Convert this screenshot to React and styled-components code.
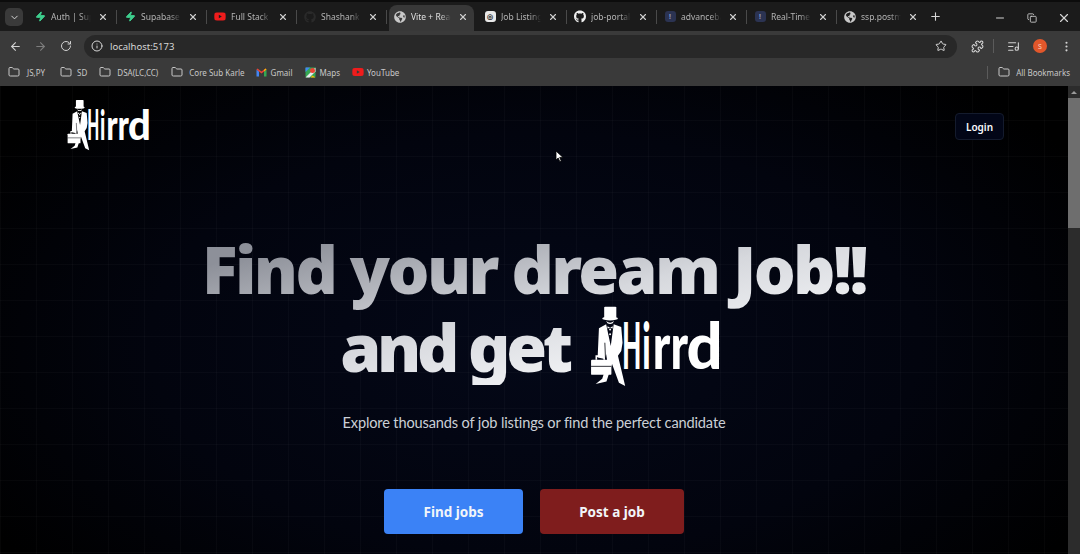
import React from "react";
import styled, { createGlobalStyle } from "styled-components";
import { ArrowLeft, ArrowRight, RotateCw, Info, Star, Puzzle, ListMusic, MoreVertical, Folder, X, Plus, Minus, ChevronDown, Zap, Copy } from "lucide-react";
import { FaGithub, FaYoutube, FaGlobeAmericas } from "react-icons/fa";

const Global = createGlobalStyle`
  html, body { margin: 0; padding: 0; background: #000; overflow: hidden; }
  * { box-sizing: border-box; }
  #root { width: 1080px; height: 554px; }
`;

const Window = styled.div`
  width: 1080px; height: 554px; display: flex; flex-direction: column; overflow: hidden;
  font-family: "Noto Sans", "Open Sans", sans-serif; background: #000;
`;
const TabStrip = styled.div`
  height: 31px; flex: none; display: flex; align-items: flex-end; padding: 3px 0 0 5px;
  background: #1b1b1b; border-top: 2px solid #0c0c0c; color: #d8d8d8;
`;
const TabMenu = styled.div`
  width: 18px; height: 18px; margin: 0 4px 5px 0; border-radius: 5px; background: #3a3a3a;
  display: flex; align-items: center; justify-content: center; flex: none;
`;
const Tab = styled.div`
  position: relative; width: 90px; height: 26px; flex: none; display: flex; align-items: center;
  padding: 0 8px 3px 7px; font-size: 8.5px; color: ${p => (p.$active ? "#e0e0e0" : "#b4b4b4")};
  &::after {
    content: ""; position: absolute; right: 0; top: 5px; height: 14px; width: 1px;
    background: ${p => (p.$active || p.$plain ? "transparent" : "#4a4a4a")};
  }
  &::before {
    content: ""; position: absolute; inset: 0 3px 0 2px; border-radius: 8px 8px 0 0;
    background: ${p => (p.$active ? "#383838" : "transparent")};
  }
`;
const TabIcon = styled.span`
  position: relative; width: 12px; height: 12px; flex: none; display: flex; align-items: center; justify-content: center;
`;
const TabTitle = styled.span`
  position: relative; margin: 0 6px 0 5px; flex: 1; overflow: hidden; white-space: nowrap;
  -webkit-mask-image: linear-gradient(to right, #000 72%, transparent);
  mask-image: linear-gradient(to right, #000 72%, transparent);
`;
const TabClose = styled.span`
  position: relative; width: 12px; flex: none; display: flex; justify-content: center; color: #cfcfcf;
`;
const NewTab = styled.div`
  width: 18px; height: 18px; margin: 0 0 6px -1px; display: flex; align-items: center; justify-content: center; color: #d6d6d6;
`;
const WindowButtons = styled.div`
  margin-left: auto; display: flex; align-self: flex-start; color: #d4d4d4; height: 26px; align-items: center;
`;
const WindowButton = styled.div`
  width: 32px; display: flex; justify-content: center;
`;
const Toolbar = styled.div`
  height: 30px; flex: none; display: flex; align-items: center; padding: 0 6px 0 3px; background: #3a3a3a; color: #cfcfcf;
`;
const ToolButton = styled.div`
  width: ${p => p.$w || 25}px; flex: none; display: flex; justify-content: center;
  color: ${p => (p.$dim ? "#7d7d7d" : "#d2d2d2")};
`;
const Omnibox = styled.div`
  height: 23px; width: 873px; margin: 0 8px 0 6px; flex: none; border-radius: 12px; background: #282828;
  display: flex; align-items: center; padding: 0 10px 0 7px; color: #d6d6d6; font-size: 9.5px;
`;
const Url = styled.span` margin-left: 7px; flex: 1; `;
const ToolSep = styled.div` width: 1px; height: 14px; margin-left: 4px; background: #5b5b5b; flex: none; `;
const Avatar = styled.div`
  width: 14px; height: 14px; flex: none; border-radius: 50%; background: #e2572b; color: #f8d3c4;
  font-size: 7px; display: flex; align-items: center; justify-content: center;
`;
const BookmarkBar = styled.div`
  height: 25px; flex: none; display: flex; align-items: center; padding: 0 10px 3px 8px; background: #3a3a3a; color: #c8c8c8; font-size: 8px;
`;
const Bookmark = styled.div`
  display: flex; align-items: center; gap: ${p => p.$inner ?? 6}px; margin-right: ${p => p.$gap ?? 14}px; white-space: nowrap;
`;
const BookmarkSep = styled.div` width: 1px; height: 13px; background: #5b5b5b; margin: 0 10px 0 auto; `;
const Viewport = styled.div`
  flex: 1; min-height: 0; display: flex; position: relative; overflow: hidden;
`;
const Page = styled.main`
  flex: 1; min-width: 0; position: relative; overflow: hidden; display: flex; flex-direction: column;
  background:
    linear-gradient(to right, rgba(255,255,255,.022) 1px, transparent 1px) 0 0 / 36px 36px,
    linear-gradient(to bottom, rgba(255,255,255,.022) 1px, transparent 1px) 0 -2px / 36px 36px,
    radial-gradient(ellipse 60% 75% at 50% 55%, #040818 0%, #02040e 60%, #000 100%);
`;
const Header = styled.header`
  display: flex; align-items: flex-start; justify-content: space-between; padding: 13px 64px 0 67px; flex: none;
`;
const LoginButton = styled.button`
  margin-top: 14px; width: 49px; height: 27px; border-radius: 4px; border: 1px solid #141b2d; background: #020617;
  color: #f8fafc; font: 600 10px "Noto Sans", sans-serif; padding: 0;
`;
const Hero = styled.section`
  display: flex; flex-direction: column; align-items: center; padding-top: 78px;
`;
const Title = styled.h1`
  margin: 0; display: flex; flex-direction: column; align-items: center;
  font: 900 66px/78px "Noto Sans", sans-serif; letter-spacing: -2.6px; white-space: nowrap;
  color: transparent; background: linear-gradient(to bottom right, #8d9099 12%, #d6d8dd 50%, #f5f6f8 80%);
  -webkit-background-clip: text; background-clip: text;
`;
const TitleRow = styled.span`
  display: flex; align-items: center; height: 78px;
`;
const TitleRowLogo = styled(TitleRow)`
  gap: 21px; letter-spacing: -4.3px; margin-right: 5px;
`;
const Subtitle = styled.p`
  margin: 28px 0 0; font: 400 14.6px/20px Lato, sans-serif; letter-spacing: -.15px; color: #cbd0d6;
`;
const Actions = styled.div` display: flex; gap: 17px; margin-top: 56px; `;
const HeroButton = styled.button`
  width: ${p => p.$w}px; height: 45px; border: 0; border-radius: 4px; background: ${p => p.$bg}; color: #f1f5f9; padding: 0;
  font: 700 13.5px "Noto Sans", sans-serif;
`;
const Scrollbar = styled.div`
  width: 12px; flex: none; background: #2c2c2c; display: flex; flex-direction: column;
`;
const ScrollArrow = styled.div`
  height: 12px; flex: none; display: flex; align-items: center; justify-content: center;
  &::before { content: ""; border: 3px solid transparent; border-bottom-color: #9a9a9a; border-top: 0; }
`;
const ScrollThumb = styled.div` width: 12px; height: 130px; background: #6e6e6e; `;
const Pointer = styled.svg` position: absolute; left: 555px; top: 64px; `;
const LogoSvg = styled.svg` display: block; flex: none; `;
const LogoLetter = styled.text`
  font-family: Lato, sans-serif; font-weight: 900; font-size: 197px; letter-spacing: 0; fill: #fff;
`;

const letters = [
  ["H", 153, 0.38], ["i", 214, 0.5], ["r", 246, 0.72], ["r", 300, 0.72], ["d", 349, 0.98],
];

const Logo = ({ width, height }) => (
  <LogoSvg width={width} height={height} viewBox="55 25 405 250" aria-label="Hirrd logo">
    <g fill="#fff">
      <rect x="98" y="30" width="37" height="34" rx="3" />
      <ellipse cx="116" cy="66" rx="24" ry="6" />
      <path d="M104 74 Q116 84 128 74 L124 81 Q116 85 108 81 Z" />
      <path d="M104 84 L82 96 L78 185 L100 190 L104 175 L108 200 L92 250 L72 266 L105 258 L122 205 L143 262 L162 272 L158 255 L140 180 L150 165 L154 140 L150 92 L127 84 L118 150 Z" />
      <circle cx="116" cy="100" r="3" />
      <circle cx="116" cy="114" r="3" />
      <path d="M108 90 L116 94 L124 90 L124 97 L116 94 L108 97 Z" />
      <rect x="58" y="192" width="62" height="46" rx="3" />
    </g>
    <path d="M74 192 V181 H98 V192" fill="none" stroke="#fff" strokeWidth="5" />
    <path d="M58 212 H120 M100 140 L102 188" fill="none" stroke="#05070f" strokeWidth="2.5" />
    {letters.map(([ch, x, sx], i) => (
      <LogoLetter key={i} transform={`translate(${x} 220) scale(${sx} 1)`}>{ch}</LogoLetter>
    ))}
  </LogoSvg>
);

const Gmail = () => (
  <svg width="11" height="9" viewBox="0 0 22 18">
    <path d="M1 17V3l5 4v10z" fill="#4285f4" />
    <path d="M16 17V7l5-4v14z" fill="#34a853" />
    <path d="M6 7 1 3l2-2 8 6 8-6 2 2-5 4-5 4z" fill="#ea4335" />
    <path d="M19 1l2 2-5 4V4z" fill="#fbbc04" />
  </svg>
);
const Maps = () => (
  <svg width="11" height="11" viewBox="0 0 22 22">
    <rect x="1" y="1" width="20" height="20" rx="2" fill="#34a853" />
    <path d="M1 21 21 1v8L9 21z" fill="#e8eaed" />
    <path d="M1 1h9L1 10z" fill="#4285f4" />
    <circle cx="15" cy="7" r="5" fill="#ea4335" />
    <path d="M11 21l4-4 6 4z" fill="#fbbc04" />
  </svg>
);
const Badge = styled.span`
  width: 11px; height: 11px; border-radius: ${p => p.$r || 3}px; background: ${p => p.$bg}; display: flex; align-items: center; justify-content: center;
  color: ${p => p.$fg || "#fff"}; font-size: 7px; font-weight: 700;
`;

const bolt = <Zap size={11} color="#3ecf8e" fill="#3ecf8e" />;
const globe = <FaGlobeAmericas size={12} color="#c8c8c8" />;
const tabs = [
  { title: "Auth | Supabase", icon: bolt },
  { title: "Supabase", icon: bolt },
  { title: "Full Stack Job", icon: <FaYoutube size={13} color="#ef1c1c" /> },
  { title: "Shashank Kumar", icon: <FaGithub size={12} color="#2a2a2a" /> },
  { title: "Vite + React", icon: globe, active: true },
  { title: "Job Listing Portal", icon: <Badge $bg="#e8e8e8" $fg="#222">◎</Badge> },
  { title: "job-portal-app", icon: <FaGithub size={13} color="#f0f0f0" /> },
  { title: "advancebackend", icon: <Badge $bg="#2b3352" $fg="#8e9bc8">!</Badge> },
  { title: "Real-Time Chat", icon: <Badge $bg="#2b3352" $fg="#8e9bc8">!</Badge> },
  { title: "ssp.postman.co", icon: globe, plain: true },
];
const folders = [
  { name: "JS,PY", inner: 7, gap: 15 },
  { name: "SD", inner: 5, gap: 12 },
  { name: "DSA(LC,CC)", inner: 6, gap: 13 },
  { name: "Core Sub Karle", inner: 6, gap: 11 },
];

export default function App() {
  return (
    <Window>
      <Global />
      <TabStrip>
        <TabMenu><ChevronDown size={11} color="#e0e0e0" /></TabMenu>
        {tabs.map(t => (
          <Tab key={t.title} $active={t.active} $plain={t.plain}>
            <TabIcon>{t.icon}</TabIcon>
            <TabTitle>{t.title}</TabTitle>
            <TabClose><X size={10} strokeWidth={2.6} /></TabClose>
          </Tab>
        ))}
        <NewTab><Plus size={13} /></NewTab>
        <WindowButtons>
          <WindowButton><Minus size={12} /></WindowButton>
          <WindowButton><Copy size={10} /></WindowButton>
          <WindowButton><X size={14} /></WindowButton>
        </WindowButtons>
      </TabStrip>
      <Toolbar>
        <ToolButton><ArrowLeft size={13} /></ToolButton>
        <ToolButton $dim><ArrowRight size={13} /></ToolButton>
        <ToolButton><RotateCw size={12} /></ToolButton>
        <Omnibox>
          <Info size={12} />
          <Url>localhost:5173</Url>
          <Star size={12} />
        </Omnibox>
        <ToolButton $w={24}><Puzzle size={13} /></ToolButton>
        <ToolSep />
        <ToolButton $w={39}><ListMusic size={13} /></ToolButton>
        <Avatar>S</Avatar>
        <ToolButton $w={38}><MoreVertical size={13} /></ToolButton>
      </Toolbar>
      <BookmarkBar>
        {folders.map(f => (
          <Bookmark key={f.name} $gap={f.gap} $inner={f.inner}><Folder size={12} />{f.name}</Bookmark>
        ))}
        <Bookmark $gap={13} $inner={4}><Gmail />Gmail</Bookmark>
        <Bookmark $gap={12} $inner={3}><Maps />Maps</Bookmark>
        <Bookmark $inner={3}><FaYoutube size={12} color="#ef1c1c" />YouTube</Bookmark>
        <BookmarkSep />
        <Bookmark $gap={0}><Folder size={12} />All Bookmarks</Bookmark>
      </BookmarkBar>
      <Viewport>
        <Page>
          <Header>
            <Logo width={84} height={52} />
            <LoginButton>Login</LoginButton>
          </Header>
          <Hero>
            <Title>
              <TitleRow>Find your dream Job!!</TitleRow>
              <TitleRowLogo>and get <Logo width={133} height={82} /></TitleRowLogo>
            </Title>
            <Subtitle>Explore thousands of job listings or find the perfect candidate</Subtitle>
            <Actions>
              <HeroButton $w={139} $bg="#3b82f6">Find jobs</HeroButton>
              <HeroButton $w={144} $bg="#7f1d1d">Post a job</HeroButton>
            </Actions>
          </Hero>
          <Pointer width="9" height="13" viewBox="0 0 9 13">
            <path d="M1 1v9l2.2-2 1.6 3.6 1.5-.7L4.7 7.4H8z" fill="#fff" stroke="#000" strokeWidth=".8" />
          </Pointer>
        </Page>
        <Scrollbar>
          <ScrollArrow />
          <ScrollThumb />
        </Scrollbar>
      </Viewport>
    </Window>
  );
}
